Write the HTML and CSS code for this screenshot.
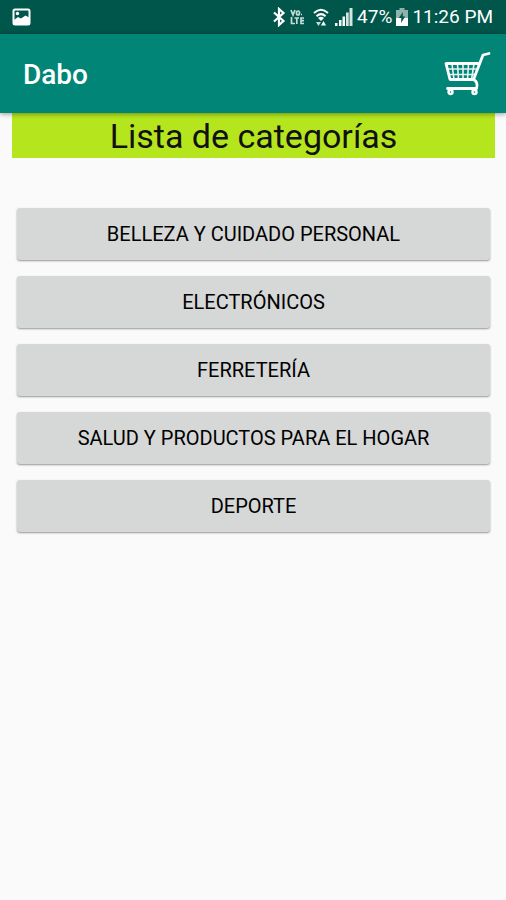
FILE: index.html
```html
<!DOCTYPE html>
<html lang="es">
<head>
  <meta charset="utf-8">
  <meta name="viewport" content="width=device-width, initial-scale=1">
  <title>Dabo</title>
  <link rel="stylesheet" href="styles.css">
</head>
<body>
  <div class="status-bar">
    <svg class="icon-photo" width="19" height="18" viewBox="0 0 19 18">
      <rect x="1.500" y="1.500" width="16" height="15" rx="1.500" fill="none" stroke="#fff" stroke-width="2"/>
      <path d="M2 12 6 9l3 1.500 4.500-3L17 9.500V16H2z" fill="#fff"/>
      <circle cx="5.500" cy="5.500" r="1.700" fill="#fff"/>
    </svg>
    <div class="status-group">
      <svg width="14" height="20" viewBox="0 0 14 20">
        <path d="M2 5.500 11.500 14 7 18V2l4.500 4L2 14.500" fill="none" stroke="#fff" stroke-width="2.200"/>
      </svg>
      <svg class="icon-lte" width="15" height="16" viewBox="0 0 15 16">
        <g fill="none" stroke="#c6dcd8" stroke-width="1.700">
          <path d="M1 1l2 5 2-5M6.500 4a1.500 2 0 1 0 3 0 1.500 2 0 1 0-3 0M1.500 8v6.500H5M4.500 9H9M6.800 9v6M14 9h-3v5.500h3M11 11.700h3M11 5.500h1"/>
        </g>
      </svg>
      <svg class="icon-wifi" width="16" height="19" viewBox="0 0 16 19">
        <path d="M1 5q7-6.500 14 0M3.500 8.200q4.500-4.200 9 0" fill="none" stroke="#fff" stroke-width="2"/>
        <path d="M5 10q3-2.500 6 0l-3 3z" fill="#fff"/>
        <path d="M3 14h5l-2.500 4z" fill="#c6dcd8"/>
        <path d="M8 17.500h5L10.500 13z" fill="#fff"/>
      </svg>
      <svg class="icon-signal" width="18" height="18" viewBox="0 0 18 18">
        <path d="M0 15h2.500v3H0zM4 12h2.500v6H4zM7.500 8.500H10V18H7.500z" fill="#fff"/>
        <path d="M11 4.500h2.700V18H11zM14.500 0H17.500v18h-3z" fill="#d3e4e1"/>
      </svg>
      <span class="battery-level">47%</span>
      <svg class="icon-battery" width="12" height="18" viewBox="0 0 12 18">
        <path d="M3.500 0h5v2H12v8H0V2h3.500z" fill="#8db3ac"/>
        <path d="M0 10h12v8H0z" fill="#fff"/>
        <path d="M7 4 2.800 10h2.500L5 15l4.200-6.500H6.700z" fill="#00564a"/>
      </svg>
      <time>11:26 PM</time>
    </div>
  </div>

  <header class="app-bar">
    <span class="app-name">Dabo</span>
    <button class="cart" type="button" aria-label="Carrito">
      <svg width="48" height="46" viewBox="0 0 48 46" fill="none" stroke="#fff" stroke-linecap="round" stroke-linejoin="round">
        <path d="M45 2.500l-6 1.500-9.500 24.500H6L2 12.500H34" stroke-width="2.800"/>
        <path d="M29.500 28.500q5 2.500 3 9H3.500" stroke-width="2.800"/>
        <path d="M4 18h28M5 23.500h25M8 13l2 15.500M13.500 13l1 15.500M19 13v15.500M24.500 13l-1 15.500M30 13l-2.500 15.500" stroke-width="1.600" opacity="0.900"/>
        <circle cx="6.500" cy="41" r="2" stroke-width="2.400"/>
        <circle cx="30.500" cy="41" r="2" stroke-width="2.400"/>
      </svg>
    </button>
  </header>

  <main class="content">
    <h1 class="title">Lista de categorías</h1>
    <nav class="categories" aria-label="Categorías">
      <button class="category" type="button">BELLEZA Y CUIDADO PERSONAL</button>
      <button class="category" type="button">ELECTRÓNICOS</button>
      <button class="category" type="button">FERRETERÍA</button>
      <button class="category" type="button">SALUD Y PRODUCTOS PARA EL HOGAR</button>
      <button class="category" type="button">DEPORTE</button>
    </nav>
  </main>
</body>
</html>
```
FILE: styles.css
```css
* {
  box-sizing: border-box;
}

body {
  margin: 0;
  min-height: 100vh;
  background: #fafafa;
  color: #111;
  font-family: Roboto, "Liberation Sans", sans-serif;
}

svg {
  display: block;
}

.status-bar {
  display: flex;
  align-items: center;
  justify-content: space-between;
  height: 34px;
  padding: 0 13px 0 12px;
  background: #00564a;
  color: #fff;
  font-size: 19px;
  line-height: 24px;
}

.status-group {
  display: flex;
  align-items: center;
  gap: 4px;
}

.icon-wifi {
  margin: 0 2px 0 4px;
}

.app-bar {
  position: relative;
  display: flex;
  align-items: center;
  justify-content: space-between;
  height: 79px;
  padding: 0 14px 0 23px;
  background: #008577;
  color: #fff;
  box-shadow: 0 1px 5px rgba(0, 0, 0, 0.4);
}

.app-name {
  padding-top: 2px;
  font-size: 28px;
  font-weight: 500;
  line-height: 32px;
}

.cart {
  padding: 0;
  border: 0;
  background: none;
}

.content {
  padding: 0 11px 0 12px;
}

.title {
  margin: 0 0 50px;
  padding-top: 2px;
  background: #b5e61d;
  font-size: 34px;
  font-weight: 400;
  line-height: 43px;
  text-align: center;
}

.categories {
  display: grid;
  gap: 16px;
  padding: 0 5px;
}

.category {
  min-height: 52px;
  padding: 0 12px;
  border: 0;
  border-radius: 3px;
  background: #d6d7d7;
  color: #000;
  font: 400 20px/24px Roboto, "Liberation Sans", sans-serif;
  box-shadow: 0 1px 2px rgba(0, 0, 0, 0.4);
}
```
